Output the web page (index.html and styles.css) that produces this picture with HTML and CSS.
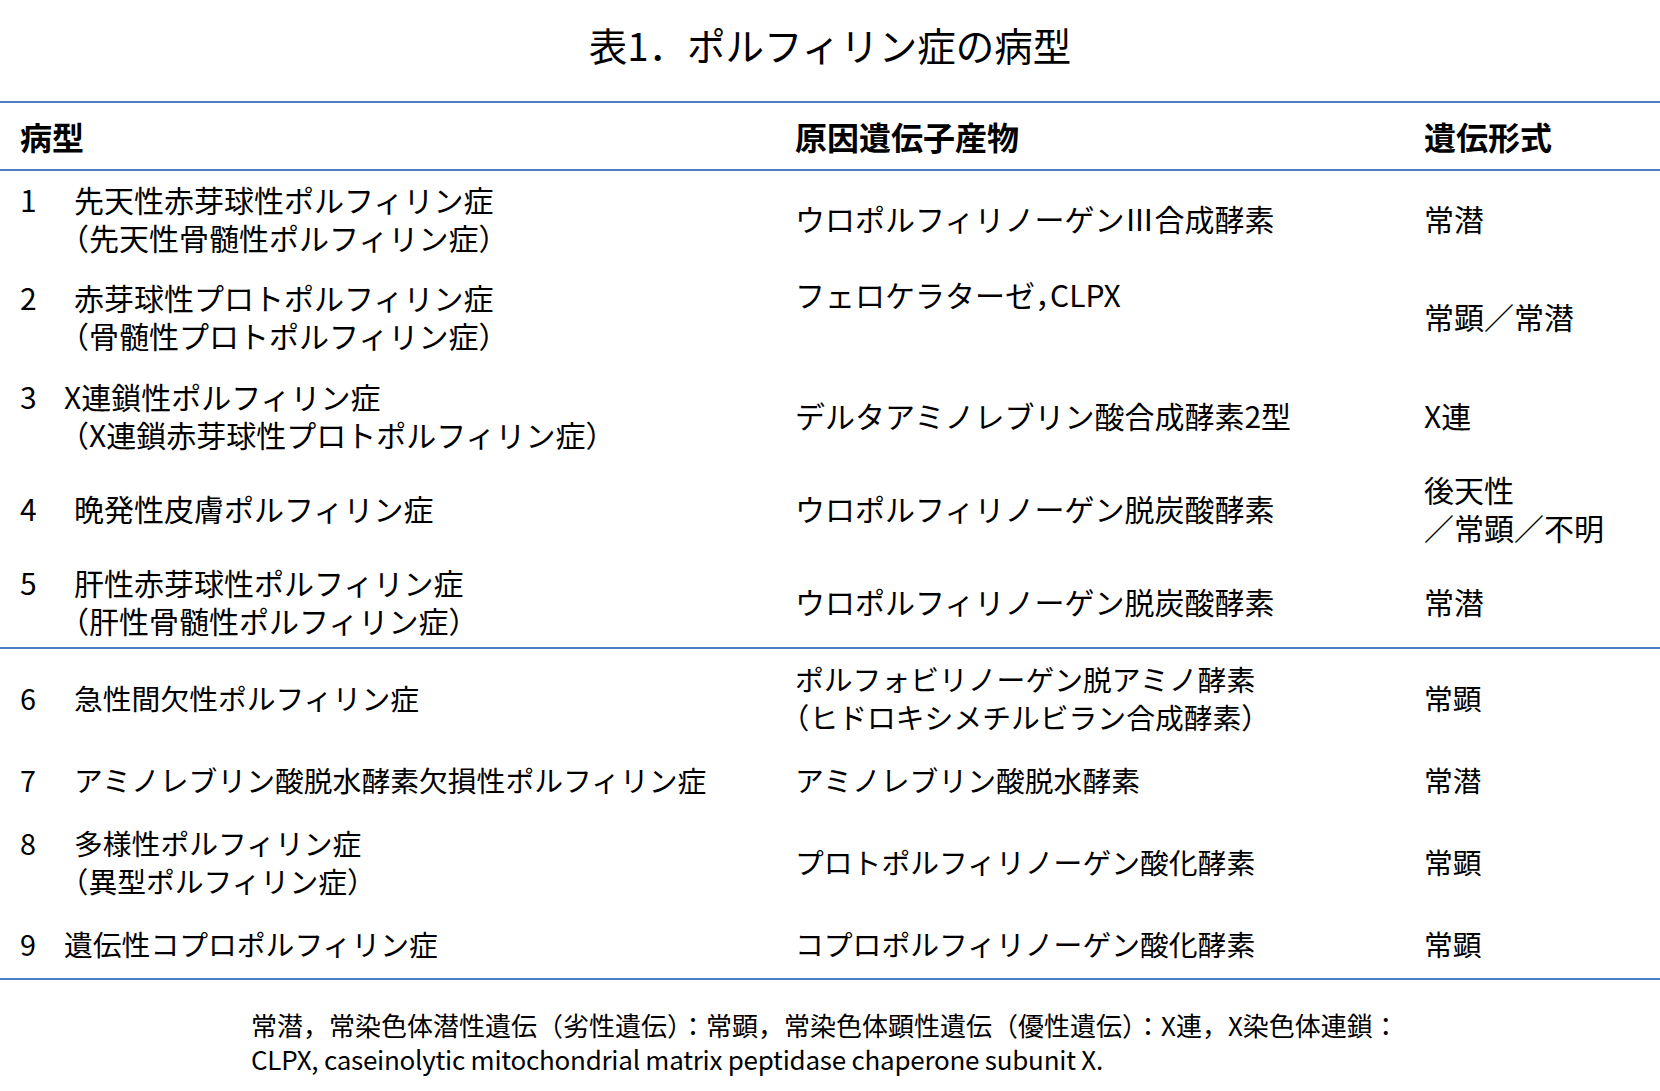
FILE: index.html
```html
<!DOCTYPE html>
<html lang="ja">
<head>
<meta charset="utf-8">
<title>表1. ポルフィリン症の病型</title>
<link rel="stylesheet" href="styles.css">
</head>
<body>
<h1 class="title">表1．ポルフィリン症の病型</h1>
<table class="types">
  <colgroup>
    <col class="c-type">
    <col class="c-gene">
    <col class="c-inherit">
  </colgroup>
  <thead>
    <tr><th>病型</th><th>原因遺伝子産物</th><th>遺伝形式</th></tr>
  </thead>
  <tbody class="group-a">
    <tr>
      <td><div><span class="num">1</span>先天性赤芽球性ポルフィリン症</div><div class="sub">（先天性骨髄性ポルフィリン症）</div></td>
      <td>ウロポルフィリノーゲンⅢ合成酵素</td>
      <td>常潜</td>
    </tr>
    <tr>
      <td><div><span class="num">2</span>赤芽球性プロトポルフィリン症</div><div class="sub">（骨髄性プロトポルフィリン症）</div></td>
      <td class="top">フェロケラターゼ，CLPX</td>
      <td>常顕／常潜</td>
    </tr>
    <tr>
      <td><div><span class="num short">3</span>X連鎖性ポルフィリン症</div><div class="sub">（X連鎖赤芽球性プロトポルフィリン症）</div></td>
      <td>デルタアミノレブリン酸合成酵素2型</td>
      <td>X連</td>
    </tr>
    <tr>
      <td><div><span class="num">4</span>晩発性皮膚ポルフィリン症</div></td>
      <td>ウロポルフィリノーゲン脱炭酸酵素</td>
      <td><div>後天性</div><div>／常顕／不明</div></td>
    </tr>
    <tr>
      <td><div><span class="num">5</span>肝性赤芽球性ポルフィリン症</div><div class="sub">（肝性骨髄性ポルフィリン症）</div></td>
      <td>ウロポルフィリノーゲン脱炭酸酵素</td>
      <td>常潜</td>
    </tr>
  </tbody>
  <tbody class="group-b">
    <tr class="r6">
      <td><div><span class="num">6</span>急性間欠性ポルフィリン症</div></td>
      <td><div>ポルフォビリノーゲン脱アミノ酵素</div><div>（ヒドロキシメチルビラン合成酵素）</div></td>
      <td>常顕</td>
    </tr>
    <tr class="r7">
      <td><div><span class="num">7</span>アミノレブリン酸脱水酵素欠損性ポルフィリン症</div></td>
      <td>アミノレブリン酸脱水酵素</td>
      <td>常潜</td>
    </tr>
    <tr class="r8">
      <td><div><span class="num">8</span>多様性ポルフィリン症</div><div class="sub">（異型ポルフィリン症）</div></td>
      <td>プロトポルフィリノーゲン酸化酵素</td>
      <td>常顕</td>
    </tr>
    <tr class="r9">
      <td><div><span class="num short">9</span>遺伝性コプロポルフィリン症</div></td>
      <td>コプロポルフィリノーゲン酸化酵素</td>
      <td>常顕</td>
    </tr>
  </tbody>
</table>
<p class="note">常潜，常染色体潜性遺伝（劣性遺伝）：常顕，常染色体顕性遺伝（優性遺伝）：X連，X染色体連鎖：<br><span class="en">CLPX, caseinolytic mitochondrial matrix peptidase chaperone subunit X.</span></p>
</body>
</html>
```

FILE: styles.css
```css
html, body {
  margin: 0;
  padding: 0;
  background: #ffffff;
}

body {
  font-family: "Noto Sans CJK JP", "Noto Sans", sans-serif;
  color: #000000;
}

.title {
  margin: 0;
  height: 101px;
  box-sizing: border-box;
  padding-top: 19px;
  font-size: 38.5px;
  line-height: 50px;
  font-weight: normal;
  text-align: center;
}

.types {
  width: 100%;
  border-collapse: collapse;
  font-size: 30px;
  line-height: 38px;
  font-feature-settings: "halt";
}

.c-type { width: 775px; }
.c-gene { width: 629px; }

.types th {
  height: 66px;
  padding: 0 0 0 20px;
  text-align: left;
  font-size: 32px;
  font-weight: bold;
  vertical-align: middle;
  border-top: 2px solid #4d7dc6;
  border-bottom: 2px solid #4d7dc6;
}

.types td {
  padding: 0 0 0 20px;
  vertical-align: middle;
  white-space: nowrap;
}

.group-a td { height: 93px; }
.group-a { border-bottom: 2px solid #4d7dc6; }

.group-b {
  font-size: 28.8px;
  border-bottom: 2px solid #4d7dc6;
}

.r6 td { height: 97px; }
.r7 td { height: 68px; }
.r8 td { height: 96px; }
.r9 td { height: 68px; }

.types td.top {
  vertical-align: top;
  padding-top: 11px;
}

.num {
  display: inline-block;
  width: 54px;
}

.num.short { width: 44px; }

.sub { padding-left: 54px; }

.note {
  margin: 28px 0 0 251px;
  font-size: 26px;
  line-height: 34px;
}

.note .en { letter-spacing: -0.25px; }
```
